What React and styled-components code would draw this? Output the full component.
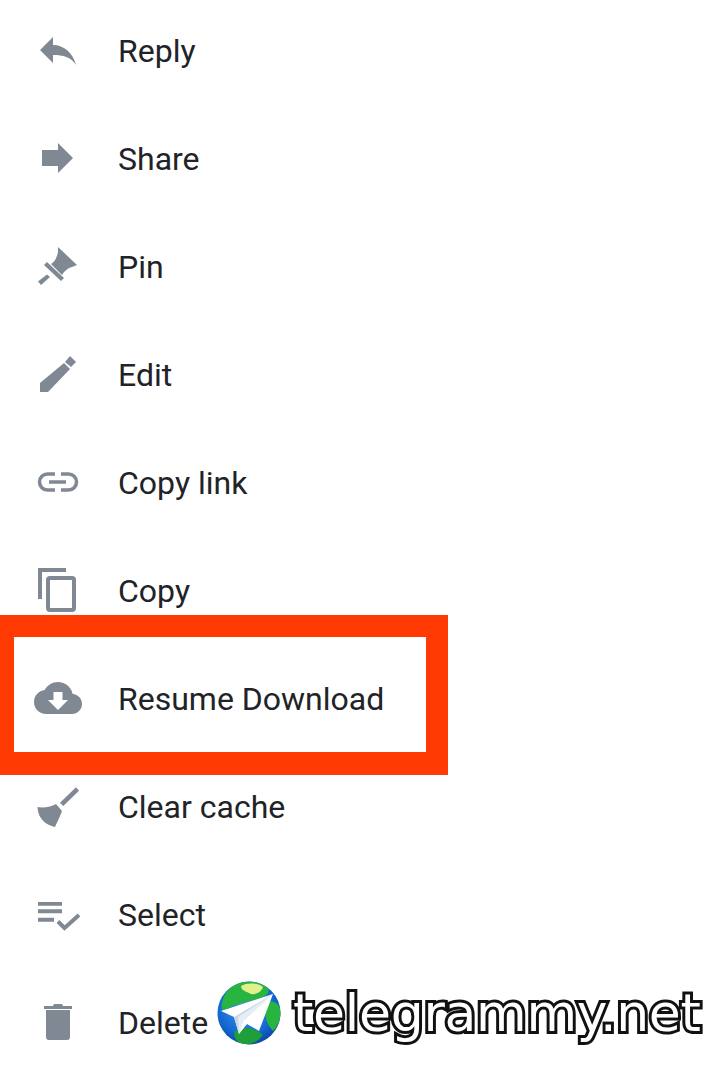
import React from 'react'
import styled, { createGlobalStyle } from 'styled-components'

const GlobalStyle = createGlobalStyle`
  html, body {
    margin: 0;
    padding: 0;
    background: #fff;
  }
`

const Screen = styled.div`
  position: relative;
  width: 720px;
  height: 1073px;
  background: #fff;
  overflow: hidden;
  font-family: Roboto, "Liberation Sans", sans-serif;
`

const Menu = styled.ul`
  list-style: none;
  margin: -3px 0 0;
  padding: 0;
`

const Row = styled.li`
  display: flex;
  align-items: center;
  height: 108px;
  padding-left: 26px;
  gap: 28px;
`

const Icon = styled.svg`
  flex: none;
  width: 64px;
  height: 64px;
  fill: ${(p) => p.$color};
`

const Label = styled.span`
  font-size: 32px;
  line-height: 40px;
  color: #212327;
`

const Highlight = styled.div`
  position: absolute;
  left: 0;
  top: 615px;
  width: 412px;
  height: 115px;
  border-style: solid;
  border-color: #ff3a02;
  border-width: 22px 22px 23px 14px;
`

const Watermark = styled.div`
  position: absolute;
  left: 217px;
  top: 981px;
  display: flex;
  align-items: center;
  gap: 12px;
  height: 64px;
`

const Globe = styled.svg`
  flex: none;
  width: 64px;
  height: 64px;
`

const Site = styled.span`
  font-family: "DejaVu Sans", sans-serif;
  font-size: 52px;
  line-height: 64px;
  letter-spacing: -0.28px;
  color: #fff;
  -webkit-text-stroke: 6px #111;
  paint-order: stroke fill;
  filter: blur(0.5px);
  white-space: nowrap;
`

const GRAY = '#7f8893'

const Stroke = ({ d, w = 4 }) => (
  <path d={d} fill="none" stroke={GRAY} strokeWidth={w} />
)

const items = [
  {
    label: 'Reply',
    icon: <path d="M14 31L27 18V26C38 26 47 34 50 46C45 38 37 36 27 36V44Z" />,
  },
  {
    label: 'Share',
    icon: <path d="M16 23H32V16L47 31L32 46V39H16Z" />,
  },
  {
    label: 'Pin',
    icon: (
      <>
        <path d="M32 12L51 30L46 32C42 33 38 36 36 40L25 29C29 27 31 22 32 17Z" />
        <path d="M21 27L38 43L35 46L18 30Z" />
        <path d="M12 46.5L21 39.5L24 42L15 50Z" />
      </>
    ),
  },
  {
    label: 'Edit',
    icon: (
      <>
        <path d="M14 40L38 20L44 26L22 49H14Z" />
        <path d="M39 19L44 13L50 19L45 24Z" />
      </>
    ),
  },
  {
    label: 'Copy link',
    icon: (
      <>
        <Stroke w={3.5} d="M29 23H21.5a8 8 0 0 0 0 16H29" />
        <Stroke w={3.5} d="M35 23H42.5a8 8 0 0 1 0 16H35" />
        <Stroke w={3.5} d="M23 31H40" />
      </>
    ),
  },
  {
    label: 'Copy',
    icon: (
      <>
        <Stroke d="M40 11H14V40" />
        <rect x="22" y="19" width="26" height="32" rx="2" fill="none" stroke={GRAY} strokeWidth="4" />
      </>
    ),
  },
  {
    label: 'Resume Download',
    icon: (
      <>
        <path
          transform="translate(8 7) scale(2)"
          d="M19.35 10.04C18.67 6.59 15.64 4 12 4 9.11 4 6.6 5.64 5.35 8.04 2.34 8.36 0 10.91 0 14c0 3.31 2.69 6 6 6h13c2.76 0 5-2.24 5-5 0-2.64-2.05-4.78-4.65-4.96z"
        />
        <path fill="#fff" d="M27.5 25H36.5V33H42L32 43L22 33H27.5Z" />
      </>
    ),
  },
  {
    label: 'Clear cache',
    icon: (
      <>
        <path d="M34 27.7L50 12.3L53 15.7L37.3 31Z" />
        <path d="M11.5 32C18 33 25 32 30 29L36 36C34 42 31 47 29 52C20 50 12 44 11.5 32Z" />
      </>
    ),
  },
  {
    label: 'Select',
    icon: (
      <>
        <path d="M12 19H36V22.7H12ZM12 26.3H36V30.3H12ZM12 34.7H28V38.7H12Z" />
        <Stroke d="M32 38.5L38.5 45L53 32" />
      </>
    ),
  },
  {
    label: 'Delete',
    icon: (
      <>
        <path d="M20 19H44V46a3 3 0 0 1-3 3H23a3 3 0 0 1-3-3Z" />
        <path d="M18 15H27L28 13H36L37 15H46V18H18Z" />
      </>
    ),
  },
]

function GlobeLogo() {
  return (
    <Globe viewBox="0 0 64 64">
      <defs>
        <radialGradient id="sea" cx="45%" cy="40%" r="65%">
          <stop offset="0%" stopColor="#3f9df0" />
          <stop offset="70%" stopColor="#1266d0" />
          <stop offset="100%" stopColor="#0b3f9a" />
        </radialGradient>
        <clipPath id="ball">
          <circle cx="32" cy="32" r="31.5" />
        </clipPath>
      </defs>
      <circle cx="32" cy="32" r="31.5" fill="url(#sea)" />
      <g clipPath="url(#ball)">
        <path fill="#27b53f" d="M14 6C22 0 38 -2 50 4C54 10 50 15 44 17C34 20 20 22 6 30C2 24 8 11 14 6Z" />
        <path fill="#dff08c" d="M24 5C30 1 42 2 46 6C44 12 36 15 32 12C28 10 24 9 24 5Z" />
        <path fill="#27b53f" d="M50 22C56 18 62 22 64 30C64 38 60 46 56 50C50 44 46 34 50 22Z" />
        <path fill="#1f9e3a" d="M18 50C28 44 40 48 46 54C40 62 30 66 22 62C18 58 16 54 18 50Z" />
      </g>
      <path fill="#fff" d="M56 13L4 30L17 36L22 53L30 43L42 50Z" />
      <path fill="#c9d8e6" d="M56 13L17 36L22 53L26 40Z" />
      <path fill="#e6eef5" d="M56 13L21 36L22 53L26 40Z" />
    </Globe>
  )
}

export default function App() {
  return (
    <Screen>
      <GlobalStyle />
      <Menu>
        {items.map((item) => (
          <Row key={item.label}>
            <Icon viewBox="0 0 64 64" $color={GRAY}>
              {item.icon}
            </Icon>
            <Label>{item.label}</Label>
          </Row>
        ))}
      </Menu>
      <Highlight />
      <Watermark>
        <GlobeLogo />
        <Site>telegrammy.net</Site>
      </Watermark>
    </Screen>
  )
}
